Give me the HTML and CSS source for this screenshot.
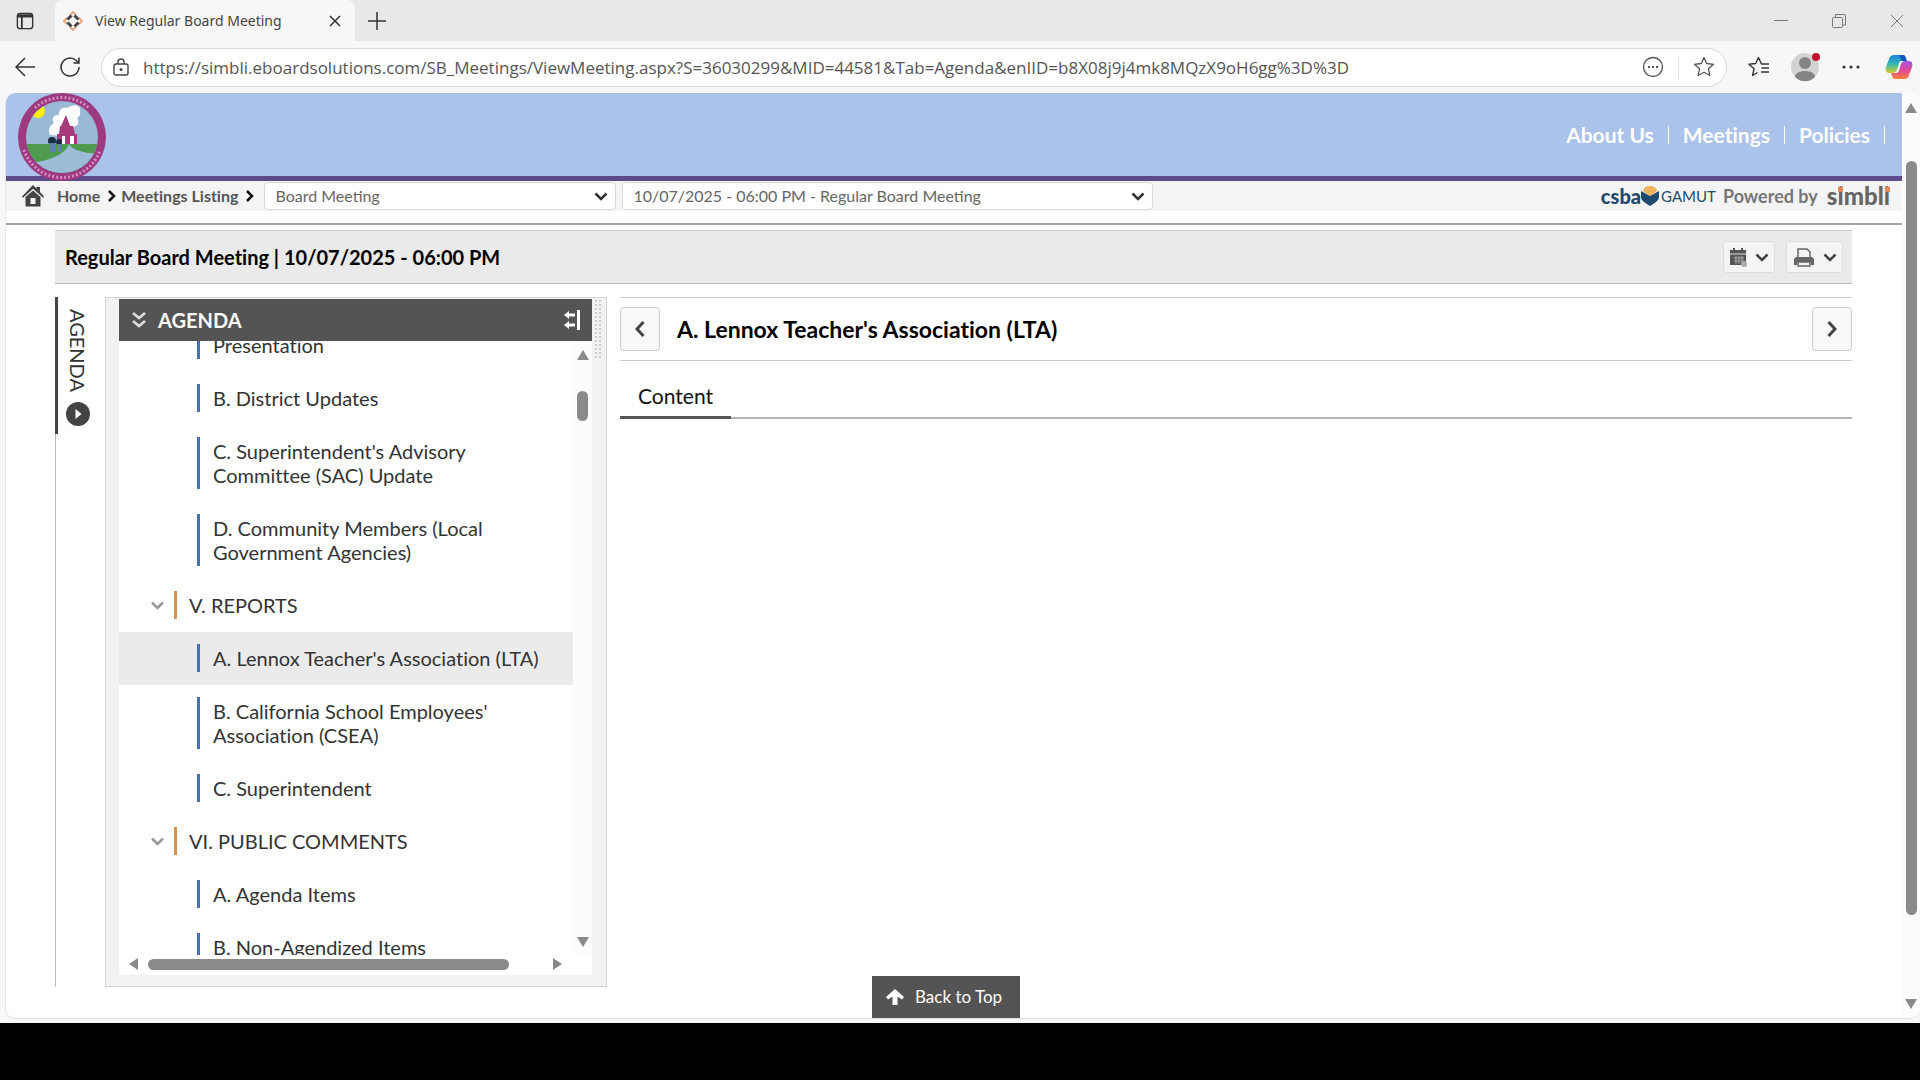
FILE: index.html
```html
<!DOCTYPE html>
<html lang="en">

<head>
    <meta charset="UTF-8">
    <meta name="viewport" content="width=device-width, initial-scale=1.0">
    <title>View Regular Board Meeting</title>
    <link rel="stylesheet" href="styles.css">
</head>

<body>
    <div class="browser">
        <!-- tab strip -->
        <div class="tabs">
            <button class="tab-menu" aria-label="Tab actions">
                <svg width="18" height="18" viewBox="0 0 20 20" fill="none" stroke="#333" stroke-width="1.5">
                    <rect x="1.5" y="1.5" width="17" height="17" rx="3"></rect>
                    <path d="M2 3.500h16M2 5h16M6.500 6v12" stroke-width="2"></path>
                </svg>
            </button>
            <div class="tab">
                <svg width="20" height="20" viewBox="0 0 20 20" fill="none">
                    <path d="M7 4 10 1l3 3M16 7l3 3-3 3M13 16l-3 3-3-3M4 13l-3-3 3-3" stroke="#e9a882" stroke-width="2"></path>
                    <path d="M4.500 8.500l4-4M11.500 4.500l4 4M15.500 11.500l-4 4M8.500 15.500l-4-4" stroke="#444" stroke-width="3"></path>
                </svg>
                <span class="tab-title">View Regular Board Meeting</span>
                <button class="icon" aria-label="Close tab">
                    <svg width="12" height="12" viewBox="0 0 12 12" stroke="#333" stroke-width="1.5"><path d="M1 1l10 10M11 1L1 11"></path></svg>
                </button>
            </div>
            <button class="icon new-tab" aria-label="New tab">
                <svg width="18" height="18" viewBox="0 0 18 18" stroke="#333" stroke-width="1.500"><path d="M9 0v18M0 9h18"></path></svg>
            </button>
            <div class="window-buttons">
                <button class="icon" aria-label="Minimize"><svg width="14" height="14" viewBox="0 0 14 14" stroke="#777"><path d="M0 6.500h14"></path></svg></button>
                <button class="icon" aria-label="Restore"><svg width="14" height="14" viewBox="0 0 14 14" fill="none" stroke="#777"><rect x=".5" y="3.500" width="10" height="10" rx="1"></rect><path d="M3.500 3V.5H12a1.500 1.500 0 0 1 1.500 1.500v9H11"></path></svg></button>
                <button class="icon" aria-label="Close"><svg width="14" height="14" viewBox="0 0 14 14" stroke="#777"><path d="M1 1l12 12M13 1L1 13"></path></svg></button>
            </div>
        </div>

        <!-- address bar -->
        <div class="toolbar">
            <button class="icon" aria-label="Back">
                <svg width="20" height="20" viewBox="0 0 20 20" fill="none" stroke="#333" stroke-width="1.500"><path d="M20 10H1M10 1l-9 9 9 9"></path></svg>
            </button>
            <button class="icon" aria-label="Refresh">
                <svg width="22" height="22" viewBox="0 0 22 22" fill="none" stroke="#333" stroke-width="1.500"><path d="M20 11a9 9 0 1 1-3-6.700l2.500 2.500M20 1.500V7h-5.500"></path></svg>
            </button>
            <div class="address">
                <svg width="16" height="18" viewBox="0 0 16 18" fill="none" stroke="#444" stroke-width="1.400">
                    <rect x="1" y="6" width="14" height="11" rx="2"></rect>
                    <path d="M5 6V4a3 3 0 0 1 6 0v2"></path>
                    <circle cx="8" cy="11.500" r=".8" fill="#444"></circle>
                </svg>
                <input type="text" aria-label="Address" value="https://simbli.eboardsolutions.com/SB_Meetings/ViewMeeting.aspx?S=36030299&amp;MID=44581&amp;Tab=Agenda&amp;enIID=b8X08j9j4mk8MQzX9oH6gg%3D%3D">
                <button class="icon" aria-label="More">
                    <svg width="22" height="22" viewBox="0 0 22 22" fill="none" stroke="#555"><circle cx="11" cy="11" r="9.500" stroke-width="1.300"></circle><path d="M6 11h2M10 11h2M14 11h2" stroke-width="2"></path></svg>
                </button>
                <span class="divider"></span>
                <button class="icon" aria-label="Add to favorites">
                    <svg width="22" height="22" viewBox="0 0 22 22" fill="none" stroke="#555" stroke-width="1.300" stroke-linejoin="round"><path d="M11 1.500l2.800 6 6.700.8-5 4.500 1.400 6.700-5.900-3.300-5.900 3.300 1.400-6.700-5-4.500 6.700-.8z"></path></svg>
                </button>
            </div>
            <div class="tools">
                <button class="icon" aria-label="Favorites">
                    <svg width="22" height="22" viewBox="0 0 22 22" fill="none" stroke="#333" stroke-width="1.400" stroke-linejoin="round"><path d="M21 8h-7.500L10.500 1.500 7.700 7.500 1 8.300l5 4.500L4.600 19.500 9.500 16.500M13.500 12H21M13 16h8"></path></svg>
                </button>
                <button class="icon" aria-label="Profile">
                    <svg width="30" height="30" viewBox="0 0 30 30">
                        <circle cx="15" cy="15" r="14" fill="#d3d3d2"></circle>
                        <circle cx="15" cy="11" r="6" fill="#858584"></circle>
                        <path d="M5 25c0-8 20-8 20 0a14 14 0 0 1-20 0z" fill="#858584"></path>
                        <circle cx="26" cy="5" r="4" fill="#c4122f"></circle>
                    </svg>
                </button>
                <button class="icon" aria-label="Settings">
                    <svg width="18" height="4" viewBox="0 0 18 4" fill="#333"><circle cx="2" cy="2" r="1.600"></circle><circle cx="9" cy="2" r="1.600"></circle><circle cx="16" cy="2" r="1.600"></circle></svg>
                </button>
                <button class="icon" aria-label="Copilot">
                    <svg width="28" height="26" viewBox="0 0 28 26">
                        <defs>
                            <linearGradient id="cool" x1="0" y1="0" x2="0" y2="1"><stop offset="0" stop-color="#1a86e0"></stop><stop offset=".5" stop-color="#35b6b0"></stop><stop offset="1" stop-color="#d5cf2c"></stop></linearGradient>
                            <linearGradient id="warm" x1="0" y1="0" x2="0" y2="1"><stop offset="0" stop-color="#a457e0"></stop><stop offset=".5" stop-color="#e0469b"></stop><stop offset="1" stop-color="#f9813a"></stop></linearGradient>
                        </defs>
                        <path d="M9 1h9c3 0 3 5 4 6h-5c-3 0-3 3-4 6s-2 6-5 6H4c-3 0-4-3-3-6l3-8c1-3 2-4 5-4z" fill="url(#cool)"></path>
                        <path d="M14 1h4c3 0 3 5 4 6h-5z" fill="#1554c0"></path>
                        <path d="M19 25h-9c-3 0-3-5-4-6h5c3 0 3-3 4-6s2-6 5-6h4c3 0 4 3 3 6l-3 8c-1 3-2 4-5 4z" fill="url(#warm)"></path>
                    </svg>
                </button>
            </div>
        </div>

        <div class="viewport">
            <div class="page">
                <header class="banner">
                    <svg class="seal" width="90" height="90" viewBox="0 0 90 90">
                        <defs>
                            <clipPath id="disc"><circle cx="45" cy="45" r="36"></circle></clipPath>
                        </defs>
                        <circle cx="45" cy="45" r="44" fill="#9d3a80"></circle>
                        <!-- lettering band -->
                        <path d="M18 16a40 40 0 0 1 54 0M7 58a40 40 0 0 0 76 0" fill="none" stroke="#d58cc0" stroke-width="3" stroke-dasharray="2 2"></path>
                        <g clip-path="url(#disc)">
                            <path d="M0 0h90v90H0z" fill="#9ab9d6"></path>
                            <circle cx="21" cy="19" r="7" fill="#fbf000"></circle>
                            <path d="M0 52h90v38H0z" fill="#4e9b50"></path>
                            <path d="M52 52c4 7 14 9 34 10v28H20c-4-6-10-12-14-18 22-2 42-8 46-20z" fill="#9cbcd8"></path>
                            <path d="M33 43c-3-6 1-10 4-12-4-5 2-9 5-8-1-6 5-9 9-7 3-4 13-4 12 2 1 5-1 7-3 8 3 4 1 8-4 9l-8 9z" fill="#fff"></path>
                            <path d="M44 34l5-11 4 11h3l2 8h2v10H40V42h2l1-8z" fill="#a83a7c"></path>
                            <path d="M45 44h3v8h-3zM53 44h4v8h-4z" fill="#fff"></path>
                            <circle cx="35" cy="49" r="4" fill="#1d2b40"></circle>
                            <circle cx="42" cy="50" r="3" fill="#1d2b40"></circle>
                            <path d="M32 51h6v9h-6zM40 52h4v8h-4z" fill="#5d83a8"></path>
                        </g>
                    </svg>
                    <nav class="nav">
                        <a href="#">About Us</a><i></i>
                        <a href="#">Meetings</a><i></i>
                        <a href="#">Policies</a><i></i>
                    </nav>
                </header>

                <div class="crumbs">
                    <a class="home" href="#">
                        <svg width="22" height="22" viewBox="0 0 22 22" fill="#444"><path d="M11 0l3.500 3.500V2H18v5l4 4.500-1 1.200L11 3.800 1 12.700 0 11.500z"></path><path d="M3.500 12L11 5.500l7.500 6.500v9.500h-15z"></path><path d="M8.500 13h5v6h-5z" fill="#f4f4f5"></path></svg>
                        Home
                    </a>
                    <svg class="sep" width="8" height="12" viewBox="0 0 8 12" fill="none" stroke="#111" stroke-width="2.500"><path d="M1 1l5 5-5 5"></path></svg>
                    <a href="#">Meetings Listing</a>
                    <svg class="sep" width="8" height="12" viewBox="0 0 8 12" fill="none" stroke="#111" stroke-width="2.500"><path d="M1 1l5 5-5 5"></path></svg>
                    <div class="select type">
                        <select aria-label="Meeting type"><option>Board Meeting</option></select>
                        <svg width="14" height="9" viewBox="0 0 14 9" fill="none" stroke="#333" stroke-width="2.500"><path d="M1.500 1.500L7 7l5.500-5.500"></path></svg>
                    </div>
                    <div class="select date">
                        <select aria-label="Meeting"><option>10/07/2025 - 06:00 PM - Regular Board Meeting</option></select>
                        <svg width="14" height="9" viewBox="0 0 14 9" fill="none" stroke="#333" stroke-width="2.500"><path d="M1.500 1.500L7 7l5.500-5.500"></path></svg>
                    </div>
                    <div class="powered">
                        <span class="csba">csba</span>
                        <svg width="18" height="20" viewBox="0 0 18 20"><path d="M2 5a7 5 0 0 1 14 0l-7 5z" fill="#efb35c"></path><path d="M0 5l9 5 9-5v6c0 4-5 6-9 9-4-3-9-5-9-9z" fill="#1e4a6d"></path></svg>
                        <span class="gamut">GAMUT</span>
                        <span class="by">Powered by</span>
                        <span class="simbli">s<b>i</b>mbl<b>i</b></span>
                    </div>
                </div>

                <main class="meeting">
                    <div class="title-bar">
                        <h1>Regular Board Meeting | 10/07/2025 - 06:00 PM</h1>
                        <button class="drop" aria-label="Calendar">
                            <svg width="18" height="19" viewBox="0 0 18 19"><path d="M1 2h3V0h2v2h6V0h2v2h3v15H1z" fill="#555"></path><path d="M1 6h16" stroke="#ddd"></path><path d="M5 10h10M5 13h10M7 8v8M10 8v8M13 8v8" stroke="#aaa"></path><circle cx="15" cy="16" r="3" fill="#aaa"></circle></svg>
                            <svg width="14" height="9" viewBox="0 0 14 9" fill="none" stroke="#444" stroke-width="2.500"><path d="M1.500 1.500L7 7l5.500-5.500"></path></svg>
                        </button>
                        <button class="drop print" aria-label="Print">
                            <svg width="22" height="19" viewBox="0 0 22 19" fill="none" stroke="#666" stroke-width="1.500"><path d="M5 10V1h9l3 3v6"></path><path d="M3 9h16l2 2v6h-3v-3H4v3H1v-6z" fill="#666" stroke="none"></path><path d="M5 14h12v4H5z" fill="#f4f4f4"></path></svg>
                            <svg width="14" height="9" viewBox="0 0 14 9" fill="none" stroke="#444" stroke-width="2.500"><path d="M1.500 1.500L7 7l5.500-5.500"></path></svg>
                        </button>
                    </div>

                    <div class="columns">
                        <div class="rail">
                            <button class="rail-tab">
                                AGENDA
                                <svg width="24" height="24" viewBox="0 0 24 24"><circle cx="12" cy="12" r="12" fill="#444"></circle><path d="M9.500 7l6 5-6 5z" fill="#fff"></path></svg>
                            </button>
                        </div>

                        <section class="panel">
                            <div class="panel-main">
                                <div class="panel-head">
                                    <svg width="14" height="16" viewBox="0 0 14 16" fill="none" stroke="#ddd" stroke-width="2.500"><path d="M1 1l6 5 6-5M1 9l6 5 6-5"></path></svg>
                                    <h2>AGENDA</h2>
                                    <button class="icon" aria-label="Collapse">
                                        <svg width="16" height="20" viewBox="0 0 16 20" fill="#fff"><path d="M13 0h3v20h-3zM0 5l5-4v2.500h6v3H5V9zM0 15l5-4v2.500h6v3H5V19z"></path></svg>
                                    </button>
                                </div>
                                <div class="scroller">
                                    <ul class="agenda">
                                        <li><a href="#">Presentation</a></li>
                                        <li><a href="#">B. District Updates</a></li>
                                        <li><a href="#">C. Superintendent's Advisory Committee (SAC) Update</a></li>
                                        <li><a href="#">D. Community Members (Local Government Agencies)</a></li>
                                        <li class="group"><svg width="13" height="9" viewBox="0 0 13 9" fill="none" stroke="#999" stroke-width="2.500"><path d="M1 1.500L6.500 7 12 1.500"></path></svg><a href="#">V. REPORTS</a></li>
                                        <li class="active"><a href="#">A. Lennox Teacher's Association (LTA)</a></li>
                                        <li><a href="#">B. California School Employees' Association (CSEA)</a></li>
                                        <li><a href="#">C. Superintendent</a></li>
                                        <li class="group"><svg width="13" height="9" viewBox="0 0 13 9" fill="none" stroke="#999" stroke-width="2.500"><path d="M1 1.500L6.500 7 12 1.500"></path></svg><a href="#">VI. PUBLIC COMMENTS</a></li>
                                        <li><a href="#">A. Agenda Items</a></li>
                                        <li><a href="#">B. Non-Agendized Items</a></li>
                                    </ul>
                                    <div class="vbar">
                                        <svg width="12" height="10" viewBox="0 0 12 10" fill="#8a8a8a"><path d="M6 0l6 10H0z"></path></svg>
                                        <span class="thumb"></span>
                                        <svg width="12" height="10" viewBox="0 0 12 10" fill="#8a8a8a"><path d="M6 10l6-10H0z"></path></svg>
                                    </div>
                                </div>
                                <div class="hbar">
                                    <svg width="9" height="12" viewBox="0 0 9 12" fill="#8a8a8a"><path d="M0 6l9-6v12z"></path></svg>
                                    <span class="thumb"></span>
                                    <svg width="9" height="12" viewBox="0 0 9 12" fill="#8a8a8a"><path d="M9 6L0 0v12z"></path></svg>
                                </div>
                            </div>
                            <div class="splitter"></div>
                        </section>

                        <section class="item">
                            <div class="item-head">
                                <button class="step" aria-label="Previous">
                                    <svg width="10" height="16" viewBox="0 0 10 16" fill="none" stroke="#444" stroke-width="3"><path d="M8.500 1L2 8l6.500 7"></path></svg>
                                </button>
                                <h2>A. Lennox Teacher's Association (LTA)</h2>
                                <button class="step" aria-label="Next">
                                    <svg width="10" height="16" viewBox="0 0 10 16" fill="none" stroke="#444" stroke-width="3"><path d="M1.500 1L8 8l-6.500 7"></path></svg>
                                </button>
                            </div>
                            <div class="item-tabs">
                                <button class="item-tab">Content</button>
                            </div>
                        </section>
                    </div>
                </main>
                <button class="to-top">
                    <svg width="18" height="16" viewBox="0 0 18 16" fill="#fff"><path d="M9 0l9 8-2 2.500-4.500-3V16h-5V7.500L2 10.500 0 8z"></path></svg>
                    Back to Top
                </button>
            </div>

            <div class="page-bar">
                <svg width="12" height="10" viewBox="0 0 12 10" fill="#8a8a8a"><path d="M6 0l6 10H0z"></path></svg>
                <div class="track"><span class="thumb"></span></div>
                <svg width="12" height="10" viewBox="0 0 12 10" fill="#8a8a8a"><path d="M6 10l6-10H0z"></path></svg>
            </div>
        </div>
    </div>
</body>

</html>
```
FILE: styles.css
```css
* {
    box-sizing: border-box;
}

body {
    margin: 0;
    min-height: 100vh;
    padding-bottom: 57px;
    display: flex;
    background: #000;
    font-family: Lato, sans-serif;
    font-size: 20px;
    font-variant-ligatures: none;
    line-height: 24px;
    color: #333;
}

a {
    color: inherit;
    text-decoration: none;
}

h1,
h2,
ul {
    margin: 0;
    padding: 0;
    font-size: 20px;
}

svg {
    display: block;
    flex: none;
}

button {
    padding: 0;
    border: none;
    background: none;
    font: inherit;
    color: inherit;
    cursor: pointer;
}

.icon {
    display: flex;
    flex: none;
}

.browser {
    flex: 1;
    min-width: 0;
    display: flex;
    flex-direction: column;
    padding-bottom: 4px;
    background: #f7f7f7;
}

/* tab strip */
.tabs {
    display: flex;
    align-items: center;
    height: 41px;
    padding: 0 16px;
    background: #e8e8e8;
}

.tab {
    display: flex;
    align-items: center;
    align-self: stretch;
    width: 300px;
    margin-left: 21px;
    padding: 0 14px 0 8px;
    border-radius: 8px 8px 0 0;
    background: #f7f7f7;
}

.tab-title {
    flex: 1;
    margin-left: 12px;
    font-family: "Noto Sans", sans-serif;
    font-size: 14px;
    color: #444;
}

.new-tab {
    margin-left: 13px;
}

.window-buttons {
    display: flex;
    gap: 44px;
    margin-left: auto;
}

/* address bar */
.toolbar {
    display: flex;
    align-items: center;
    height: 52px;
    padding: 0 7px 0 15px;
}

.toolbar > .icon {
    margin-right: 24px;
}

.toolbar > .icon + .icon {
    margin-right: 20px;
}

.address {
    flex: 1;
    display: flex;
    align-items: center;
    height: 39px;
    padding: 0 11px;
    border: 1px solid #d6d8dc;
    border-radius: 20px;
    background: #fff;
}

.address input {
    flex: 1;
    min-width: 0;
    margin-left: 14px;
    padding: 0;
    border: none;
    outline: none;
    background: none;
    font-family: "Open Sans", sans-serif;
    font-size: 17px;
    color: #555;
}

.divider {
    width: 1px;
    height: 24px;
    margin: 0 14px;
    background: #e4e4e4;
}

.tools {
    display: flex;
    align-items: center;
    gap: 22px;
    margin-left: 21px;
}

.tools .icon:first-child {
    margin-right: -2px;
}

.tools .icon:last-child {
    margin-left: 3px;
}

/* page */
.viewport {
    flex: 1;
    display: flex;
    margin-left: 5px;
    border-bottom: 1px solid #ddd;
    border-left: 1px solid #e6e6e6;
    border-radius: 10px;
    background: #fff;
    overflow: hidden;
}

.page {
    flex: 1;
    min-width: 0;
    display: flex;
    flex-direction: column;
    position: relative;
}

.banner {
    display: flex;
    align-items: center;
    justify-content: space-between;
    height: 88px;
    padding: 0 17px 0 11px;
    border-bottom: 5px solid #5d4a8c;
    background: #abc2ea;
}

/* the seal hangs over the purple line */
.seal {
    position: relative;
    z-index: 1;
    margin: 4px 0 0;
}

.nav {
    display: flex;
    align-items: center;
    gap: 14px;
    font-size: 21px;
    font-weight: bold;
    color: #fff;
}

.nav i {
    width: 1px;
    height: 18px;
    background: #fff;
}

.crumbs {
    display: flex;
    align-items: center;
    height: 44px;
    padding: 0 12px 12px 16px;
    border-bottom: 2px solid #a5a5a8;
    background: linear-gradient(#f4f4f5 30px, #fff 30px);
    font-size: 16px;
    font-weight: bold;
    color: #555;
}

.home {
    display: flex;
    align-items: center;
    gap: 13px;
}

.sep {
    margin: 0 5px 0 8px;
}

.select {
    position: relative;
    height: 28px;
}

.select select {
    width: 100%;
    height: 100%;
    padding: 0 10px 1px;
    border: 1px solid #d8d8da;
    border-radius: 4px;
    appearance: none;
    background: #fff;
    font-family: inherit;
    font-size: 16px;
    color: #666;
}

.select svg {
    position: absolute;
    top: 10px;
    right: 8px;
    pointer-events: none;
}

.type {
    width: 352px;
    margin-left: 5px;
}

.date {
    width: 531px;
    margin-left: 6px;
}

.powered {
    display: flex;
    align-items: center;
    margin-left: auto;
    white-space: nowrap;
}

.csba {
    font-size: 20px;
    font-weight: 900;
    color: #1e4a6d;
}

.gamut {
    margin: 0 7px 0 2px;
    font-size: 15px;
    font-weight: normal;
    color: #1e4a6d;
}

.by {
    font-size: 18px;
    color: #777;
}

.simbli {
    margin-left: 9px;
    font-size: 24px;
    font-weight: 900;
    color: #666;
}

.simbli b {
    position: relative;
    font-weight: inherit;
}

/* orange dot over each i */
.simbli b::after {
    content: "";
    position: absolute;
    top: 6px;
    left: 1px;
    width: 5px;
    height: 5px;
    background: #e08a5c;
}

/* meeting */
.meeting {
    flex: 1;
    display: flex;
    flex-direction: column;
    padding: 5px 50px 31px 49px;
}

.title-bar {
    display: flex;
    align-items: center;
    height: 54px;
    padding: 0 9px 0 10px;
    border-top: 1px solid #ccc;
    border-bottom: 1px solid #bbb;
    background: #eaeaea;
}

.title-bar h1 {
    flex: 1;
    color: #000;
}

.drop {
    display: flex;
    align-items: center;
    justify-content: center;
    gap: 8px;
    width: 52px;
    height: 32px;
    border: 1px solid #ddd;
    border-radius: 3px;
    background: #f4f4f4;
}

.print {
    width: 57px;
    margin-left: 11px;
}

.columns {
    flex: 1;
    display: flex;
    margin-top: 13px;
}

.rail {
    width: 50px;
    border-left: 1px solid #bbb;
}

.rail-tab {
    display: flex;
    align-items: center;
    gap: 10px;
    height: 137px;
    width: 42px;
    margin-left: -1px;
    padding: 12px 0 0;
    border-left: 3px solid #444;
    writing-mode: vertical-rl;
}

.panel {
    display: flex;
    width: 502px;
    padding: 1px 0 11px 13px;
    border: 1px solid #d4d4d4;
    background: #f2f2f2;
}

.panel-main {
    flex: 1;
    display: flex;
    flex-direction: column;
    background: #fff;
}

.panel-head {
    display: flex;
    align-items: center;
    height: 42px;
    padding: 0 12px 0 13px;
    background: #545454;
    color: #fff;
}

.panel-head h2 {
    flex: 1;
    margin-left: 12px;
}

.scroller {
    flex: 1 0 0;
    display: flex;
    overflow: hidden;
}

.agenda {
    flex: 1;
    margin-top: -22px;
    list-style: none;
}

.agenda li {
    display: flex;
    align-items: center;
    padding: 12px 20px 13px 78px;
}

.agenda .group {
    gap: 10px;
    padding-left: 32px;
}

.agenda .active {
    background: #ebebeb;
}

.agenda a {
    padding: 2px 0 2px 13px;
    border-left: 3px solid #4472b4;
}

.agenda .group a {
    padding-left: 12px;
    border-color: #dd9345;
}

.thumb {
    border-radius: 6px;
    background: #8a8a8a;
}

.vbar {
    display: flex;
    flex-direction: column;
    align-items: center;
    width: 19px;
    padding: 9px 0 8px;
    background: #fcfcfc;
}

.vbar .thumb {
    width: 11px;
    height: 30px;
    margin: 31px 0 auto;
}

.hbar {
    display: flex;
    align-items: center;
    height: 20px;
    padding: 0 30px 2px 10px;
}

.hbar .thumb {
    width: 361px;
    height: 11px;
    margin: 0 auto 0 10px;
}

/* drag handle dots at the top of the splitter */
.splitter {
    width: 14px;
    background: radial-gradient(#ccc 1px, transparent 1px) 2px 0 / 4px 4px repeat-y, radial-gradient(#ccc 1px, transparent 1px) 6px 0 / 4px 4px repeat-y;
    clip-path: inset(0 0 calc(100% - 60px) 0);
}

.item {
    flex: 1;
    margin-left: 13px;
}

.item-head {
    display: flex;
    align-items: center;
    height: 64px;
    border-top: 1px solid #ccc;
    border-bottom: 1px solid #ccc;
}

.item-head h2 {
    flex: 1;
    margin-left: 17px;
    font-size: 23px;
    color: #000;
}

.step {
    display: flex;
    align-items: center;
    justify-content: center;
    width: 40px;
    height: 44px;
    border: 1px solid #ccc;
    border-radius: 4px;
    background: #f9f9f9;
}

.item-tabs {
    display: flex;
    height: 58px;
    border-bottom: 2px solid #b5b5b5;
}

.item-tab {
    width: 111px;
    height: 58px;
    padding-top: 14px;
    border-bottom: 3px solid #555;
    font-size: 21px;
    color: #111;
}

.to-top {
    position: absolute;
    bottom: 0;
    left: calc(50% - 82px);
    display: flex;
    align-items: center;
    gap: 11px;
    height: 42px;
    padding: 0 18px 0 14px;
    background: #545454;
    font-size: 17px;
    color: #fff;
}

.page-bar {
    display: flex;
    flex-direction: column;
    align-items: center;
    width: 18px;
    padding: 10px 0 9px;
    background: #fcfcfc;
}

.track {
    flex: 1;
    display: flex;
    padding: 48px 0 84px;
}

.track .thumb {
    width: 11px;
}
```
